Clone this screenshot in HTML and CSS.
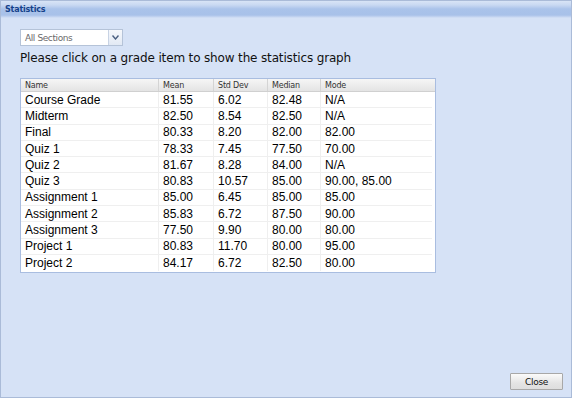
FILE: index.html
```html
<!DOCTYPE html>
<html>
<head>
<meta charset="utf-8">
<link rel="stylesheet" href="styles.css">
</head>
<body>
<div class="window">
  <div class="titlebar">Statistics</div>
  <div class="body">
    <div class="select"><span class="select-text">All Sections</span><span class="select-btn"><svg width="7" height="5" viewBox="0 0 7 5"><path d="M0.5 0.5 L3.5 4 L6.5 0.5" fill="none" stroke="#4a5f80" stroke-width="1.4"/></svg></span></div>
    <div class="hint">Please click on a grade item to show the statistics graph</div>
    <div class="grid">
      <div class="row head">
        <div class="c name">Name</div><div class="c mean">Mean</div><div class="c sd">Std Dev</div><div class="c med">Median</div><div class="c mode">Mode</div>
      </div>
      <div class="row"><div class="c name">Course Grade</div><div class="c mean">81.55</div><div class="c sd">6.02</div><div class="c med">82.48</div><div class="c mode">N/A</div></div>
      <div class="row"><div class="c name">Midterm</div><div class="c mean">82.50</div><div class="c sd">8.54</div><div class="c med">82.50</div><div class="c mode">N/A</div></div>
      <div class="row"><div class="c name">Final</div><div class="c mean">80.33</div><div class="c sd">8.20</div><div class="c med">82.00</div><div class="c mode">82.00</div></div>
      <div class="row"><div class="c name">Quiz 1</div><div class="c mean">78.33</div><div class="c sd">7.45</div><div class="c med">77.50</div><div class="c mode">70.00</div></div>
      <div class="row"><div class="c name">Quiz 2</div><div class="c mean">81.67</div><div class="c sd">8.28</div><div class="c med">84.00</div><div class="c mode">N/A</div></div>
      <div class="row"><div class="c name">Quiz 3</div><div class="c mean">80.83</div><div class="c sd">10.57</div><div class="c med">85.00</div><div class="c mode">90.00, 85.00</div></div>
      <div class="row"><div class="c name">Assignment 1</div><div class="c mean">85.00</div><div class="c sd">6.45</div><div class="c med">85.00</div><div class="c mode">85.00</div></div>
      <div class="row"><div class="c name">Assignment 2</div><div class="c mean">85.83</div><div class="c sd">6.72</div><div class="c med">87.50</div><div class="c mode">90.00</div></div>
      <div class="row"><div class="c name">Assignment 3</div><div class="c mean">77.50</div><div class="c sd">9.90</div><div class="c med">80.00</div><div class="c mode">80.00</div></div>
      <div class="row"><div class="c name">Project 1</div><div class="c mean">80.83</div><div class="c sd">11.70</div><div class="c med">80.00</div><div class="c mode">95.00</div></div>
      <div class="row last"><div class="c name">Project 2</div><div class="c mean">84.17</div><div class="c sd">6.72</div><div class="c med">82.50</div><div class="c mode">80.00</div></div>
    </div>
    <div class="spacer"></div>
    <div class="footer"><button class="btn">Close</button></div>
  </div>
</div>
</body>
</html>
```

FILE: styles.css
```css
html, body { margin: 0; padding: 0; background: #ffffff; }
body { font-family: "Liberation Sans", Arial, sans-serif; }
.window {
  width: 572px;
  height: 398px;
  box-sizing: border-box;
  border: 1px solid #aabbd8;
  background: #d6e2f6;
  display: flex;
  flex-direction: column;
}
.titlebar {
  height: 17px;
  box-sizing: border-box;
  padding: 2px 0 0 4px;
  font-size: 8px;
  font-weight: bold;
  color: #15428b;
  background: linear-gradient(#d8e4f6 0, #c9d9f2 4px, #aac3ea 8px, #a8c1e9 14px, #c6d6f1 16px, #d6e2f6 17px);
  line-height: 13px;
  font-family: "DejaVu Sans", sans-serif;
  letter-spacing: -0.2px;
}
.body {
  flex: 1;
  display: flex;
  flex-direction: column;
  padding: 11px 0 0 19px;
}
.select {
  width: 103px;
  height: 17px;
  box-sizing: border-box;
  border: 1px solid #b5c3d8;
  background: #ffffff;
  display: flex;
  align-items: center;
}
.select-text {
  flex: 1;
  font-size: 9px;
  color: #6a6a6a;
  padding-left: 4px;
  font-family: "DejaVu Sans", sans-serif;
  letter-spacing: -0.4px;
}
.select-btn {
  width: 13px;
  height: 15px;
  border-left: 1px solid #c8d3e4;
  background: linear-gradient(#f6f8fc, #e2e9f4);
  display: flex;
  align-items: center;
  justify-content: center;
}
.hint {
  margin-top: 5px;
  font-size: 12px;
  color: #111;
  font-family: "DejaVu Sans", sans-serif;
  letter-spacing: -0.15px;
  line-height: 15px;
}
.grid {
  margin-top: 12px;
  width: 416px;
  box-sizing: border-box;
  border: 1px solid #a9bde0;
  background: #ffffff;
  display: flex;
  flex-direction: column;
  padding-bottom: 1px;
}
.row {
  display: flex;
  height: 16.3px;
  align-items: center;
  border-bottom: 1px solid #efefef;
  box-sizing: border-box;
  margin-right: 3px;
  font-size: 12px;
  color: #000;
}
.row.last { border-bottom: none; }
.row.head {
  height: 13px;
  margin-right: 0;
  background: linear-gradient(#f6f6f6, #e4e4e4);
  border-bottom: 1px solid #d0d0d0;
  font-size: 8px;
  color: #333;
  font-family: "DejaVu Sans", sans-serif;
  letter-spacing: -0.2px;
}
.c {
  box-sizing: border-box;
  padding-left: 4px;
  height: 100%;
  display: flex;
  align-items: center;
  border-right: 1px solid #efefef;
  white-space: nowrap;
}
.row.head .c { border-right: 1px solid #d4d4d4; }
.name { width: 138px; }
.mean { width: 55px; }
.sd { width: 54px; }
.med { width: 53px; }
.mode { flex: 1; border-right: none; }
.row.head .mode { border-right: none; }
.spacer { flex: 1; }
.footer {
  display: flex;
  justify-content: flex-end;
  padding: 0 8px 7px 0;
}
.btn {
  width: 53px;
  height: 17px;
  padding: 0;
  border: 1px solid #a8a8a8;
  border-radius: 1px;
  background: linear-gradient(#fbfbfb, #e4e4e4 60%, #dedede);
  font-family: "DejaVu Sans", sans-serif;
  font-size: 9px;
  color: #111;
  letter-spacing: -0.3px;
}
```
